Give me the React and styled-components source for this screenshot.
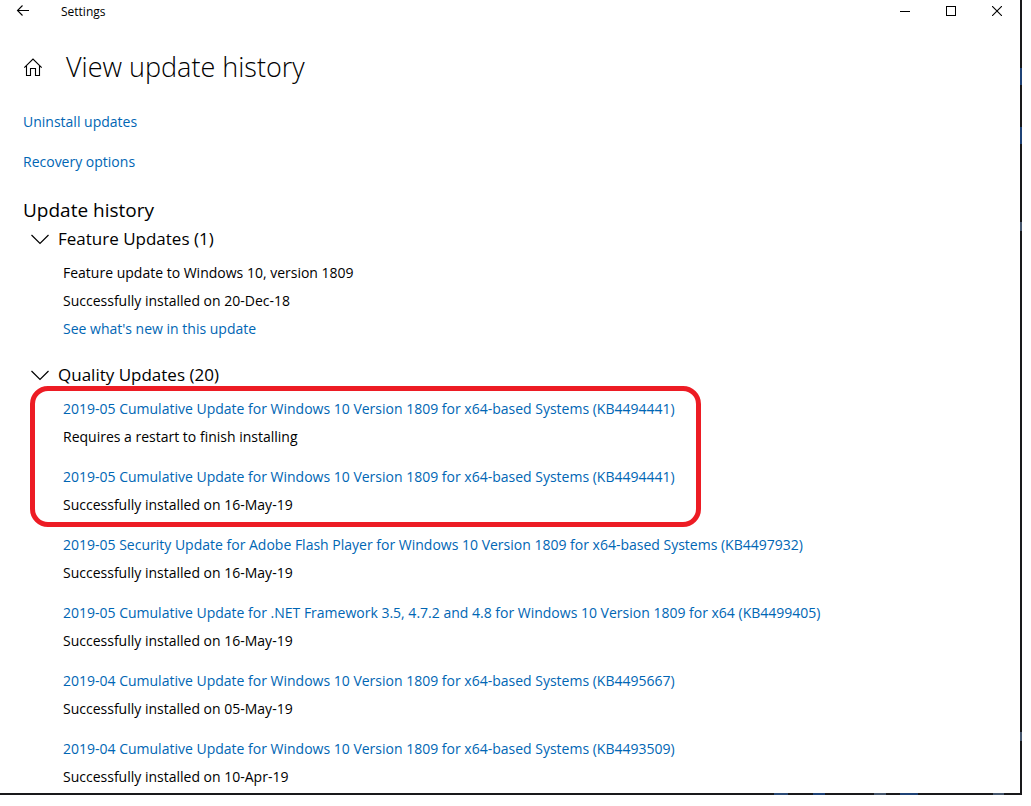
import React, { useState } from "react";
import styled, { createGlobalStyle } from "styled-components";

const featureUpdates = [
  {
    id: 1,
    title: "Feature update to Windows 10, version 1809",
    status: "Successfully installed on 20-Dec-18",
    more: "See what's new in this update",
  },
];

const pendingUpdates = [
  {
    id: 1,
    title: "2019-05 Cumulative Update for Windows 10 Version 1809 for x64-based Systems (KB4494441)",
    status: "Requires a restart to finish installing",
  },
  {
    id: 2,
    title: "2019-05 Cumulative Update for Windows 10 Version 1809 for x64-based Systems (KB4494441)",
    status: "Successfully installed on 16-May-19",
  },
];

const qualityUpdates = [
  {
    id: 3,
    title: "2019-05 Security Update for Adobe Flash Player for Windows 10 Version 1809 for x64-based Systems (KB4497932)",
    status: "Successfully installed on 16-May-19",
  },
  {
    id: 4,
    title: "2019-05 Cumulative Update for .NET Framework 3.5, 4.7.2 and 4.8 for Windows 10 Version 1809 for x64 (KB4499405)",
    status: "Successfully installed on 16-May-19",
  },
  {
    id: 5,
    title: "2019-04 Cumulative Update for Windows 10 Version 1809 for x64-based Systems (KB4495667)",
    status: "Successfully installed on 05-May-19",
  },
  {
    id: 6,
    title: "2019-04 Cumulative Update for Windows 10 Version 1809 for x64-based Systems (KB4493509)",
    status: "Successfully installed on 10-Apr-19",
  },
];

const UpdateItem = ({ update, linked }) => (
  <SItem>
    {linked ? <SLink href="#details">{update.title}</SLink> : <SText>{update.title}</SText>}
    <SText>{update.status}</SText>
    {update.more && <SLink href="#whats-new">{update.more}</SLink>}
  </SItem>
);

const UpdateSection = ({ title, children }) => {
  const [open, setOpen] = useState(true);

  return (
    <SSection>
      <SSection_title>
        <SSection_toggle type="button" aria-expanded={open} onClick={() => setOpen(!open)}>
          <SChevron open={open} viewBox="0 0 20 12" aria-hidden="true">
            <path d="M1.5 2 L10 10.5 L18.5 2" />
          </SChevron>
          {title}
        </SSection_toggle>
      </SSection_title>
      {open && <SSection_body>{children}</SSection_body>}
    </SSection>
  );
};

const App = () => (
  <>
    <GlobalStyle />
    <SDesktop>
      <SWindow>
        <STitleBar>
          <SCaption_button type="button" aria-label="Back">
            <SIcon width="14" height="12" viewBox="0 0 14 12">
              <path d="M13 5.5 H1.5 M6.5 0.5 L1.5 5.5 L6.5 10.5" />
            </SIcon>
          </SCaption_button>
          <SCaption>Settings</SCaption>
          <SCaption_button type="button" aria-label="Minimize">
            <SIcon width="10" height="10" viewBox="0 0 10 10" crisp>
              <path d="M0 5.5 H10" />
            </SIcon>
          </SCaption_button>
          <SCaption_button type="button" aria-label="Maximize">
            <SIcon width="10" height="10" viewBox="0 0 10 10" crisp>
              <rect x="0.5" y="0.5" width="9" height="9" />
            </SIcon>
          </SCaption_button>
          <SCaption_button type="button" aria-label="Close">
            <SIcon width="10" height="10" viewBox="0 0 10 10">
              <path d="M0 0 L10 10 M10 0 L0 10" />
            </SIcon>
          </SCaption_button>
        </STitleBar>
        <SContent>
          <SHeader>
            <SHome_button type="button" aria-label="Home">
              <SIcon width="20" height="20" viewBox="0 0 20 20">
                <path d="M1.3 10.7 L10 2 L18.7 10.7 M3.5 9 V18.5 H7.5 V11.5 H12.5 V18.5 H16.5 V9" />
              </SIcon>
            </SHome_button>
            <SPage_title>View update history</SPage_title>
          </SHeader>
          <SLinks>
            <SLink href="#uninstall">Uninstall updates</SLink>
            <SLink href="#recovery">Recovery options</SLink>
          </SLinks>
          <SHistory_title>Update history</SHistory_title>
          <SHistory>
            <UpdateSection title="Feature Updates (1)">
              {featureUpdates.map((update) => (
                <UpdateItem key={update.id} update={update} />
              ))}
            </UpdateSection>
            <UpdateSection title="Quality Updates (20)">
              <SMarked>
                {pendingUpdates.map((update) => (
                  <UpdateItem key={update.id} update={update} linked />
                ))}
              </SMarked>
              {qualityUpdates.map((update) => (
                <UpdateItem key={update.id} update={update} linked />
              ))}
            </UpdateSection>
          </SHistory>
        </SContent>
      </SWindow>
    </SDesktop>
  </>
);

const GlobalStyle = createGlobalStyle`
  * {
    box-sizing: border-box;
  }
  body {
    margin: 0;
    background-color: white;
    color: black;
    font-family: "Segoe UI", "Open Sans", "Noto Sans", sans-serif;
    font-size: 14px;
    line-height: 20px;
  }
  h1, h2, h3, p {
    margin: 0;
  }
  button {
    padding: 0;
    border: none;
    background: none;
    color: inherit;
    font: inherit;
  }
`;

// a thin strip of the wallpaper shows along the right and bottom edges
const SDesktop = styled.div`
  margin: 0 9px 11px 0;
  padding: 0 2px 2px 0;
  background:
    linear-gradient(#1f4275, #1f4275) right 0 top 68px / 2px 17px,
    linear-gradient(#1f4275, #1f4275) right 0 top 127px / 2px 17px,
    linear-gradient(#46566c, #46566c) right 0 top 222px / 2px 9px,
    linear-gradient(#46566c, #46566c) right 0 bottom 54px / 2px 9px,
    linear-gradient(#2b4a75, #2b4a75) right 234px bottom 0 / 14px 2px,
    linear-gradient(#1f4275, #1f4275) right 197px bottom 0 / 12px 2px,
    linear-gradient(#46566c, #46566c) right 136px bottom 0 / 12px 2px,
    linear-gradient(#1f4275, #1f4275) right 104px bottom 0 / 18px 2px,
    linear-gradient(#46566c, #46566c) right 18px bottom 0 / 11px 2px;
  background-repeat: no-repeat;
  background-color: #19191b;
`;

const SWindow = styled.div`
  background-color: white;
`;

const STitleBar = styled.header`
  display: flex;
  align-items: center;
  height: 22px;
`;

const SCaption_button = styled.button`
  display: flex;
  align-items: center;
  justify-content: center;
  width: 46px;
  height: 22px;
`;

const SCaption = styled.span`
  flex: 1;
  padding: 2px 0 0 15px;
  font-size: 12px;
`;

const SIcon = styled.svg.withConfig({
  shouldForwardProp: (prop) => prop !== "crisp",
})`
  fill: none;
  stroke: black;
  stroke-width: ${ props => props.crisp ? "1" : "1.1" };
  shape-rendering: ${ props => props.crisp ? "crispEdges" : "auto" };
`;

const SContent = styled.main`
  padding: 27px 23px 6px;
`;

const SHeader = styled.div`
  display: flex;
  align-items: center;
`;

const SHome_button = styled.button`
  display: flex;
  width: 43px;
`;

const SPage_title = styled.h1`
  font-size: 27px;
  font-weight: 300;
  line-height: 36px;
`;

const SLinks = styled.nav`
  display: flex;
  flex-direction: column;
  align-items: flex-start;
  gap: 20px;
  margin: 27px 0 24px;
`;

const SLink = styled.a`
  color: #0066b4;
  text-decoration: none;
  &:hover {
    color: gray;
  }
`;

const SText = styled.p`
  color: black;
`;

const SHistory_title = styled.h2`
  font-size: 19px;
  font-weight: 400;
  line-height: 28px;
`;

const SHistory = styled.div`
  display: flex;
  flex-direction: column;
  gap: 24px;
  padding: 3px 0 0 7px;
`;

const SSection = styled.section`
  display: flex;
  flex-direction: column;
  gap: 12px;
`;

const SSection_title = styled.h3`
  font-size: 17px;
  font-weight: 400;
  line-height: 24px;
`;

const SSection_toggle = styled.button`
  display: flex;
  align-items: center;
  gap: 8px;
`;

const SChevron = styled.svg.withConfig({
  shouldForwardProp: (prop) => prop !== "open",
})`
  width: 20px;
  height: 12px;
  fill: none;
  stroke: black;
  stroke-width: 1.2;
  transform: ${ props => props.open ? "none" : "rotate(-90deg)" };
`;

const SSection_body = styled.div`
  display: flex;
  flex-direction: column;
  align-items: flex-start;
  gap: 20px;
  padding-left: 33px;
`;

const SItem = styled.article`
  display: flex;
  flex-direction: column;
  align-items: flex-start;
  gap: 8px;
`;

const SMarked = styled.div`
  position: relative;
  display: flex;
  flex-direction: column;
  gap: 20px;
  &::after {
    content: "";
    position: absolute;
    inset: -13px -26px -12px -33px;
    border: solid 5px #ed1c24;
    border-radius: 18px;
    pointer-events: none;
  }
`;

export default App;
